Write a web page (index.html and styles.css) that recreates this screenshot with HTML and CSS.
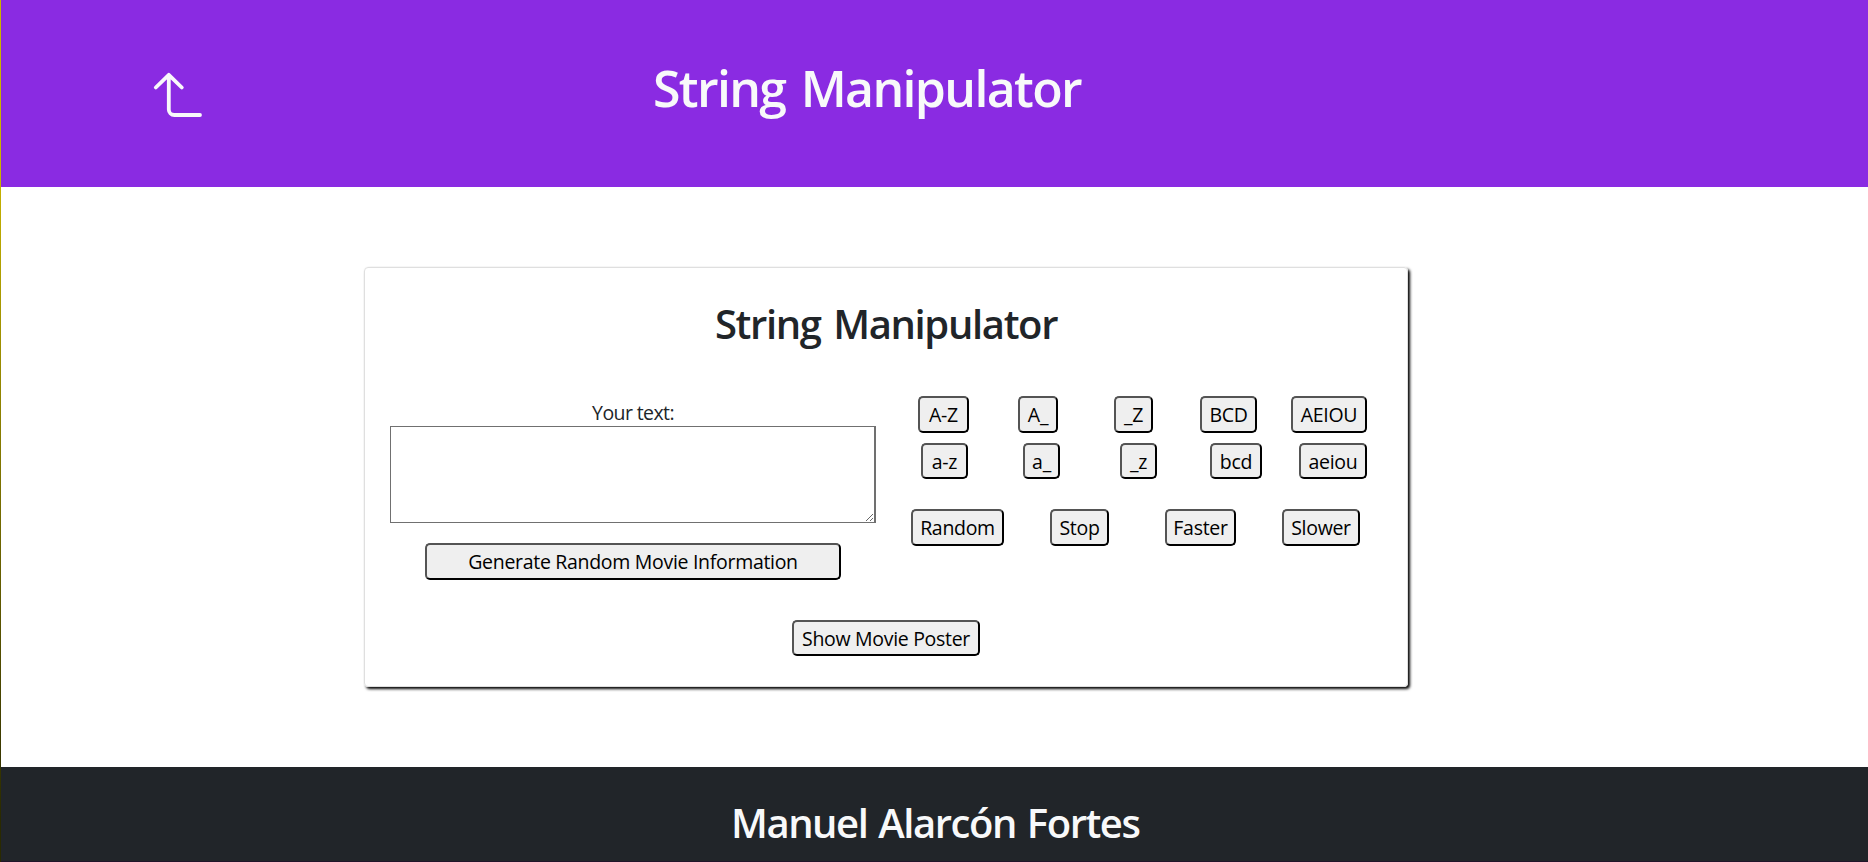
FILE: index.html
```
<!DOCTYPE html>
<html lang="en">
<head>
<meta charset="utf-8">
<title>String Manipulator</title>
<link rel="stylesheet" href="styles.css">
</head>
<body>
<div class="edge"></div>
<div class="page">
  <header class="header">
    <a class="back" href="#" aria-label="Back">
      <svg width="50" height="46" viewBox="0 0 50 46" fill="none" stroke="#f8f9fa" stroke-width="3.8" stroke-linecap="round" stroke-linejoin="round"><path d="M4.8 17.5 17.8 4.8 30.8 17.5M17.8 4.8V39.5A5.5 5.5 0 0 0 23.3 45H49"/></svg>
    </a>
    <h1 class="title"><span>String Manipulator</span></h1>
  </header>
  <main class="main">
    <section class="card">
      <h2 class="card-title"><span>String Manipulator</span></h2>
      <div class="columns">
        <div class="left">
          <label class="label" for="text"><span>Your text:</span></label>
          <textarea class="text" id="text"></textarea>
          <button class="btn generate"><span>Generate Random Movie Information</span></button>
        </div>
        <div class="right">
          <div class="row upper">
            <button class="btn w51">A-Z</button><button class="btn w40">A_</button><button class="btn w39">_Z</button><button class="btn w57">BCD</button><button class="btn w76">AEIOU</button>
          </div>
          <div class="row lower">
            <button class="btn w47">a-z</button><button class="btn w37">a_</button><button class="btn w37">_z</button><button class="btn w52">bcd</button><button class="btn w68">aeiou</button>
          </div>
          <div class="row speed">
            <button class="btn w93">Random</button><button class="btn w59">Stop</button><button class="btn w71">Faster</button><button class="btn w78">Slower</button>
          </div>
        </div>
      </div>
      <button class="btn poster"><span>Show Movie Poster</span></button>
    </section>
  </main>
  <footer class="footer"><h2 class="author"><span>Manuel Alarcón Fortes</span></h2></footer>
</div>
</body>
</html>
```
FILE: styles.css
```
* { box-sizing: border-box; }
body {
  margin: 0;
  height: 862px;
  overflow: hidden;
  display: flex;
  background: #fff;
  color: #212529;
  font-family: "Open Sans", "Noto Sans", sans-serif;
  font-size: 19.5px;
}
.edge { width: 1px; background: linear-gradient(#c8b400, #c8b400 20%, #2a2a00 95%); }
.page { flex: 1; display: flex; flex-direction: column; }
h1, h2 { margin: 0; font-weight: 600; white-space: nowrap; }
.header { height: 187px; background: #8a2be2; color: #f8f9fa; display: flex; align-items: flex-start; }
.back { margin: 70px 0 0 150px; width: 50px; height: 48px; }
.back svg { display: block; overflow: visible; }
.title { margin: 54px 0 0 452px; width: 428px; font-size: 50px; line-height: 68px; letter-spacing: -1.65px; word-spacing: 4px; display: flex; justify-content: center; }
.main { height: 580px; padding: 80px 0 0 363px; }
.card {
  width: 1044px;
  height: 420px;
  border: 1px solid #dfdfdf;
  border-radius: 4px;
  box-shadow: 2px 2px 3px #000;
  display: flex;
  flex-direction: column;
  align-items: center;
}
.card-title { margin-top: 29px; font-size: 40px; line-height: 54px; letter-spacing: -1.35px; word-spacing: 3.5px; }
.columns { width: 100%; margin-top: 45px; height: 184px; display: flex; }
.left { width: 486px; margin-left: 25px; display: flex; flex-direction: column; align-items: center; }
.label { line-height: 26px; margin-top: 4px; letter-spacing: -.6px; }
.text { display: block; width: 486px; height: 97px; margin: 0; border: 1px solid #707070; border-right-width: 2px; background: #fff; resize: both; }
.btn {
  height: 37px;
  padding: 1px 0 0;
  border: 2px outset #000;
  border-radius: 5px;
  background: #efefef;
  color: #000;
  font: 19.5px/30px "Open Sans", "Noto Sans", sans-serif;
  letter-spacing: -.3px;
  white-space: nowrap;
}
.generate { width: 416px; margin-top: 20px; }
.right { margin-left: 35px; }
.row { display: grid; justify-items: start; }
.upper { margin-left: 7px; grid-template-columns: 100px 96px 86px 91px 76px; }
.lower { margin: 10px 0 0 10px; grid-template-columns: 102px 97px 90px 89px 68px; }
.lower .btn { height: 36px; }
.speed { margin-top: 30px; grid-template-columns: 139px 115px 117px 78px; }
.w37 { width: 37px; }
.w39 { width: 39px; }
.w40 { width: 40px; }
.w47 { width: 47px; }
.w51 { width: 51px; }
.w52 { width: 52px; }
.w57 { width: 57px; }
.w59 { width: 59px; }
.w68 { width: 68px; }
.w71 { width: 71px; }
.w76 { width: 76px; }
.w78 { width: 78px; }
.w93 { width: 93px; }
.poster { width: 188px; height: 36px; margin-top: 40px; }
.footer { height: 95px; background: #212529; color: #f8f9fa; border-bottom: 1px solid #20152a; padding: 29px 0 0 730px; }
.author { font-size: 40px; line-height: 54px; letter-spacing: -1.45px; word-spacing: 2px; }
```
